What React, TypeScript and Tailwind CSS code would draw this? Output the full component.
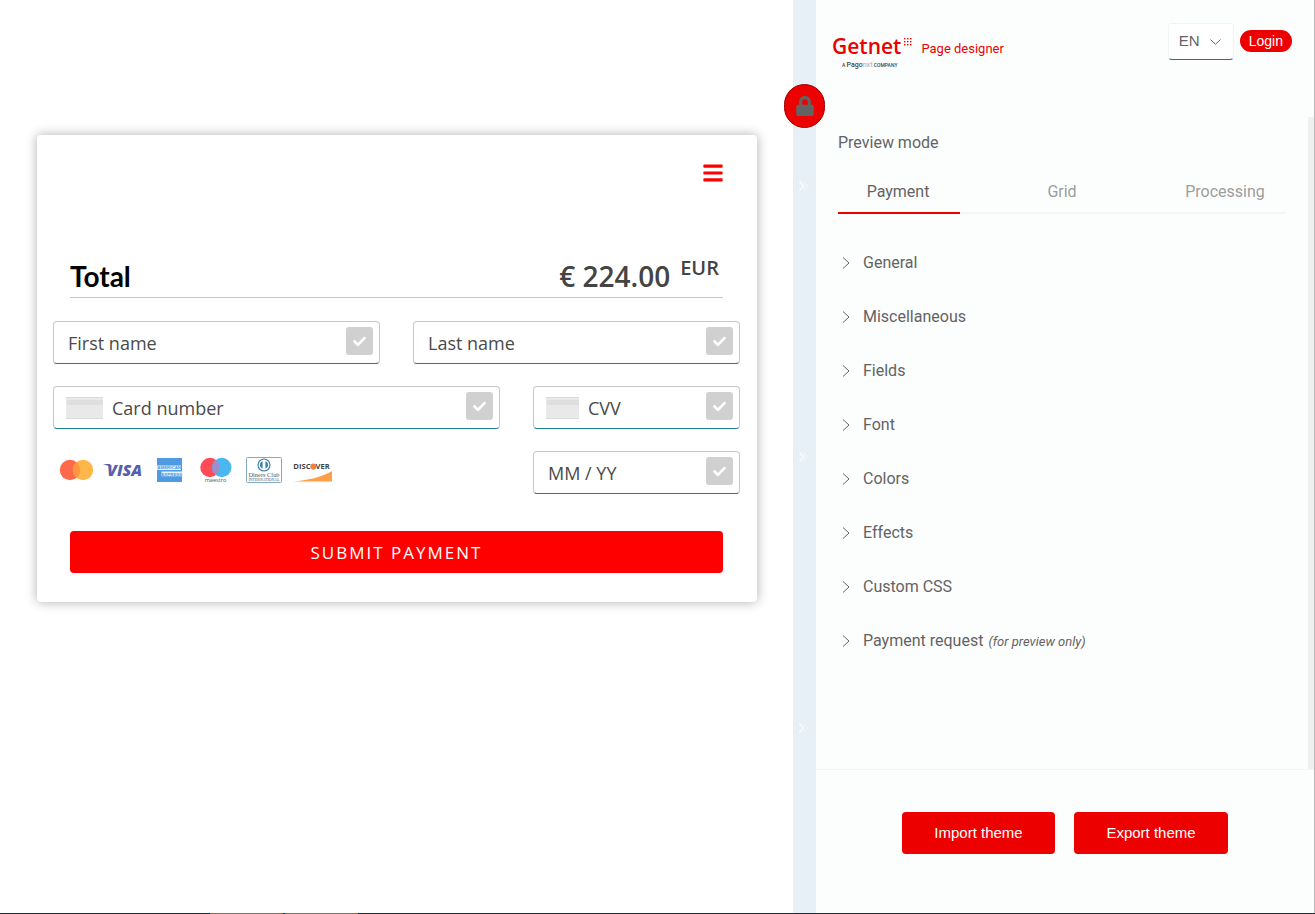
import React from "react";
import { FaBars, FaCheck, FaLock } from "react-icons/fa";

function Check() {
  return (
    <span className="mt-[5px] flex h-7 w-[27px] shrink-0 items-center justify-center self-start rounded-[3px] bg-[#d0d0d0] text-white">
      <FaCheck size={13} />
    </span>
  );
}

function CardGlyph({ narrow = false }: { narrow?: boolean }) {
  return (
    <span
      className={
        (narrow ? "w-[33px]" : "w-[37px]") +
        " mr-[9px] flex h-[22px] shrink-0 flex-col border-y border-[#dadada] bg-[#e9e9e9] pt-0.5"
      }
    >
      <span className="ml-px h-[5px] bg-[#dedede]" />
    </span>
  );
}

type FieldProps = { label: string; className?: string; icon?: React.ReactNode };

function Field({ label, className = "", icon }: FieldProps) {
  return (
    <label
      className={
        className +
        " flex h-[43px] items-center rounded border border-[#c8c8c8] border-b-[#1f7a9f] bg-white pr-1.5 " +
        (icon ? "pl-3" : "pl-3.5")
      }
    >
      {icon}
      <input
        type="text"
        aria-label={label}
        placeholder={label}
        className="h-full min-w-0 flex-1 bg-transparent font-['Open_Sans',sans-serif] text-lg text-[#444] outline-none placeholder:text-[#4a4a4a]"
      />
      <Check />
    </label>
  );
}

function Brands() {
  const cell = "h-7 w-10 overflow-visible";
  return (
    <div className="flex gap-[7px] pl-[3px]">
      <svg className={cell} viewBox="0 0 40 28" aria-label="Mastercard">
        <circle cx="14" cy="14" r="10.2" fill="#ff6a4b" />
        <circle cx="27" cy="14" r="10.2" fill="#ffb74a" />
        <path d="M20.5 6.1a10.2 10.2 0 0 1 0 15.8a10.2 10.2 0 0 1 0-15.8Z" fill="#ff9640" />
      </svg>
      <svg className={cell} viewBox="0 0 40 28" aria-label="Visa">
        <text x="4" y="20" fontFamily="Open Sans, sans-serif" fontWeight="800" fontStyle="italic" fontSize="16" fill="#555fae">
          VISA
        </text>
        <path d="M0 8h7l1.5 3z" fill="#555fae" />
      </svg>
      <svg className={cell} viewBox="0 0 40 28" aria-label="American Express">
        <rect x="7" y="2" width="25" height="24" fill="#4e9be3" />
        <path d="M7 9.500h24v4.600H7zM11.500 15.600H32v4.600H11.500z" fill="#e4f0fb" />
        <g fontFamily="Liberation Sans, sans-serif" fontWeight="700" fontSize="4.4" fill="#4e9be3" textAnchor="middle">
          <text x="19.2" y="13.4">AMERICAN</text>
          <text x="21.8" y="19.5">EXPRESS</text>
        </g>
      </svg>
      <svg className={cell} viewBox="0 0 40 28" aria-label="Maestro">
        <circle cx="13" cy="11.5" r="9.7" fill="#ff4b55" />
        <circle cx="24.8" cy="11.5" r="9.7" fill="#4bb7f0" />
        <path d="M18.9 3.800a9.700 9.700 0 0 1 0 15.400a9.700 9.700 0 0 1 0-15.400Z" fill="#9b8fd0" />
        <text x="18.5" y="26" textAnchor="middle" fontFamily="Open Sans, sans-serif" fontSize="5.6" fill="#555">
          maestro
        </text>
      </svg>
      <svg className={cell} viewBox="0 0 40 28" aria-label="Diners Club">
        <rect x="2.5" y="1.5" width="35" height="25" rx="1" fill="#fff" stroke="#7fa9c4" />
        <circle cx="20" cy="9" r="6" fill="#fff" stroke="#3f7fac" strokeWidth="1.2" />
        <path d="M18.6 5.200a4 4 0 0 0 0 7.600zM21.400 5.200a4 4 0 0 1 0 7.600z" fill="#3f7fac" />
        <text x="20" y="20.700" textAnchor="middle" fontFamily="Liberation Serif, serif" fontSize="6.4" fill="#555">
          Diners Club
        </text>
        <text x="20" y="24.600" textAnchor="middle" fontFamily="Liberation Serif, serif" fontSize="3.900" fill="#555">
          INTERNATIONAL
        </text>
      </svg>
      <svg className={cell} viewBox="0 0 40 28" aria-label="Discover">
        <g fontFamily="Open Sans, sans-serif" fontWeight="700" fontSize="7.600" fill="#444">
          <text x="19.5" y="13.300" textAnchor="end">DISC</text>
          <text x="24.6" y="13.300">VER</text>
        </g>
        <circle cx="22.400" cy="10.600" r="3.100" fill="#f5803a" />
        <path d="M2 25.500C16 24.500 31 21 41 15V25.500Z" fill="#ff9f4a" />
      </svg>
    </div>
  );
}

function Preview() {
  return (
    <main className="min-w-0 flex-1 bg-white pt-[135px] pr-9 pl-[37px]">
      <form
        className="rounded bg-white pt-[27px] pr-[17px] pb-[29px] pl-4 shadow-[0_0_12px_rgba(0,0,0,0.32)]"
        onSubmit={(e) => e.preventDefault()}
      >
        <div className="flex justify-end pr-4">
          <button type="button" aria-label="Menu" className="text-[#f00]">
            <FaBars size={22} />
          </button>
        </div>
        <div className="mx-[17px] flex h-[114px] items-end justify-between border-b border-[#c8c8c8]">
          <h1 className="font-['Lato',sans-serif] text-[28px] leading-[42px] font-bold text-black">Total</h1>
          <p className="flex items-start pr-1 font-['Open_Sans',sans-serif] text-[28px] leading-[42px] font-semibold text-[#444]">
            <span>€ 224.00</span>
            <span className="ml-2.5 text-[20px] leading-[26px]">EUR</span>
          </p>
        </div>
        <div className="mt-[23px] flex gap-[33px]">
          <Field label="First name" className="min-w-0 flex-1" />
          <Field label="Last name" className="min-w-0 flex-1" />
        </div>
        <div className="mt-[22px] flex gap-[33px]">
          <Field label="Card number" className="min-w-0 flex-1" icon={<CardGlyph />} />
          <Field label="CVV" className="w-[207px]" icon={<CardGlyph narrow />} />
        </div>
        <div className="mt-[22px] flex items-start justify-between">
          <div className="pt-[5px]">
            <Brands />
          </div>
          <Field label="MM / YY" className="w-[207px]" />
        </div>
        <div className="mt-[37px] px-[17px]">
          <button
            type="submit"
            className="h-[42px] w-full rounded bg-[#f00] pt-0.5 font-['Open_Sans',sans-serif] text-[17px] font-medium tracking-[2px] text-white"
          >
            SUBMIT PAYMENT
          </button>
        </div>
      </form>
    </main>
  );
}

function Divider() {
  return (
    <div className="relative flex w-[23px] shrink-0 flex-col bg-[#e8f0f7] pt-[50px] pb-[49px]">
      <div className="flex flex-1 flex-col justify-around pr-0.5">
        {[0, 1, 2].map((i) => (
          <svg key={i} className="h-3 w-3 self-center" viewBox="0 0 12 12" fill="none" strokeWidth="1.6">
            <path d="M5.500 1.500L9.500 6L5.500 10.500" stroke="#eff5f8" />
            <path d="M1.500 1.500L5.500 6L1.500 10.500" stroke="#f8fbfd" />
          </svg>
        ))}
      </div>
      <button
        type="button"
        aria-label="Lock panel"
        className="absolute top-[84px] left-[-9px] z-10 flex h-11 w-[41px] items-center justify-center rounded-full border border-[#a30000] bg-[#ec0000] text-[#636363]"
      >
        <FaLock size={20} />
      </button>
    </div>
  );
}

const dots = [0, 1, 2].flatMap((r) => [0, 1, 2].map((c) => [c, r]));

function Header() {
  return (
    <header className="flex h-[117px] items-start justify-between pr-[22px] pl-4">
      <div className="flex pt-8 text-[#ec0000]">
        <div>
          <div className="flex items-start">
            <span className="font-['Open_Sans',sans-serif] text-[21px] leading-7 font-semibold">Getnet</span>
            <svg className="mt-1.5 ml-[3px] h-2 w-2" viewBox="0 0 8 8" fill="#ec0000">
              {dots.map(([c, r]) => (
                <rect key={`${c}${r}`} x={c * 3} y={r * 3} width="1.4" height="1.4" />
              ))}
            </svg>
          </div>
          <p className="pl-2.5 font-['Roboto',sans-serif] text-[5px] leading-[10px] font-medium text-[#444]">
            A <span className="text-[7px]">Pago<span className="text-[#bbb]">nxt</span></span> COMPANY
          </p>
        </div>
        <span className="pt-[7px] pl-[9px] font-['Roboto',sans-serif] text-[13px] leading-5">Page designer</span>
      </div>
      <div className="flex items-start gap-1.5 pt-[23px] font-['Liberation_Sans',sans-serif]">
        <div className="relative flex items-center">
          <select
            aria-label="Language"
            className="h-[37px] w-[66px] appearance-none rounded border border-[#f1f3f5] border-b-[#1f6f9f] bg-white pl-2.5 text-[15px] text-[#636363]"
          >
            <option>EN</option>
          </select>
          <svg className="pointer-events-none absolute right-[13px] h-1.5 w-[11px]" viewBox="0 0 11 6" fill="none" stroke="#e0304a">
            <path d="M.5.5L5.500 5.300L10.500.5" />
          </svg>
        </div>
        <button type="button" className="mt-[7px] h-[22px] rounded-full bg-[#ec0000] px-[9px] text-sm leading-[21px] text-white">
          Login
        </button>
      </div>
    </header>
  );
}

const sections = ["General", "Miscellaneous", "Fields", "Font", "Colors", "Effects", "Custom CSS", "Payment request"];

function Designer() {
  return (
    <aside className="flex w-[499px] shrink-0 flex-col border-r border-[#b8b8b8] bg-[#fcfefe] font-['Roboto',sans-serif] text-base text-[#636363]">
      <Header />
      <div className="flex flex-1">
        <div className="min-w-0 flex-1 pr-[22px] pl-[22px]">
          <h2 className="pt-3.5 leading-6">Preview mode</h2>
          <div role="tablist" className="mt-3 flex justify-between border-b-2 border-[#f3f5f6]">
            <button role="tab" aria-selected="true" className="-mb-0.5 h-[47px] w-[122px] border-b-2 border-[#ec0000] pt-1 pr-0.5">
              Payment
            </button>
            <button role="tab" aria-selected="false" className="h-[45px] w-[122px] pt-1 text-[#9c9c9c]">
              Grid
            </button>
            <button role="tab" aria-selected="false" className="h-[45px] w-[122px] pt-1 text-[#9c9c9c]">
              Processing
            </button>
          </div>
          <div className="pt-[22px]">
            {sections.map((name) => (
              <button key={name} type="button" className="flex h-[54px] w-full items-center pl-1 text-left">
                <svg className="mr-[13px] h-3 w-2 shrink-0" viewBox="0 0 8 12" fill="none" stroke="#636363">
                  <path d="M1 .5L7 6L1 11.500" />
                </svg>
                <span>
                  {name}
                  {name === "Payment request" && <em className="ml-[5px] text-[13px]">(for preview only)</em>}
                </span>
              </button>
            ))}
          </div>
        </div>
        <div className="w-1.5 bg-[#f0f0f0]" />
      </div>
      <footer className="flex h-36 justify-center gap-[19px] border-t border-[#f2f4f5] pt-[42px] font-['Liberation_Sans',sans-serif] text-[15px] text-white">
        <button type="button" className="h-[42px] w-[153px] rounded bg-[#ec0000]">Import theme</button>
        <button type="button" className="h-[42px] w-[154px] rounded bg-[#ec0000]">Export theme</button>
      </footer>
    </aside>
  );
}

export default function App() {
  return (
    <div className="flex min-h-screen flex-col bg-white">
      <div className="flex flex-1">
        <Preview />
        <Divider />
        <Designer />
      </div>
      <div className="flex h-px bg-[#1f2937] pl-[210px]">
        <span className="w-[73px] bg-[#9a6a48]" />
        <span className="ml-0.5 w-[73px] bg-[#9a6a48]" />
      </div>
    </div>
  );
}
